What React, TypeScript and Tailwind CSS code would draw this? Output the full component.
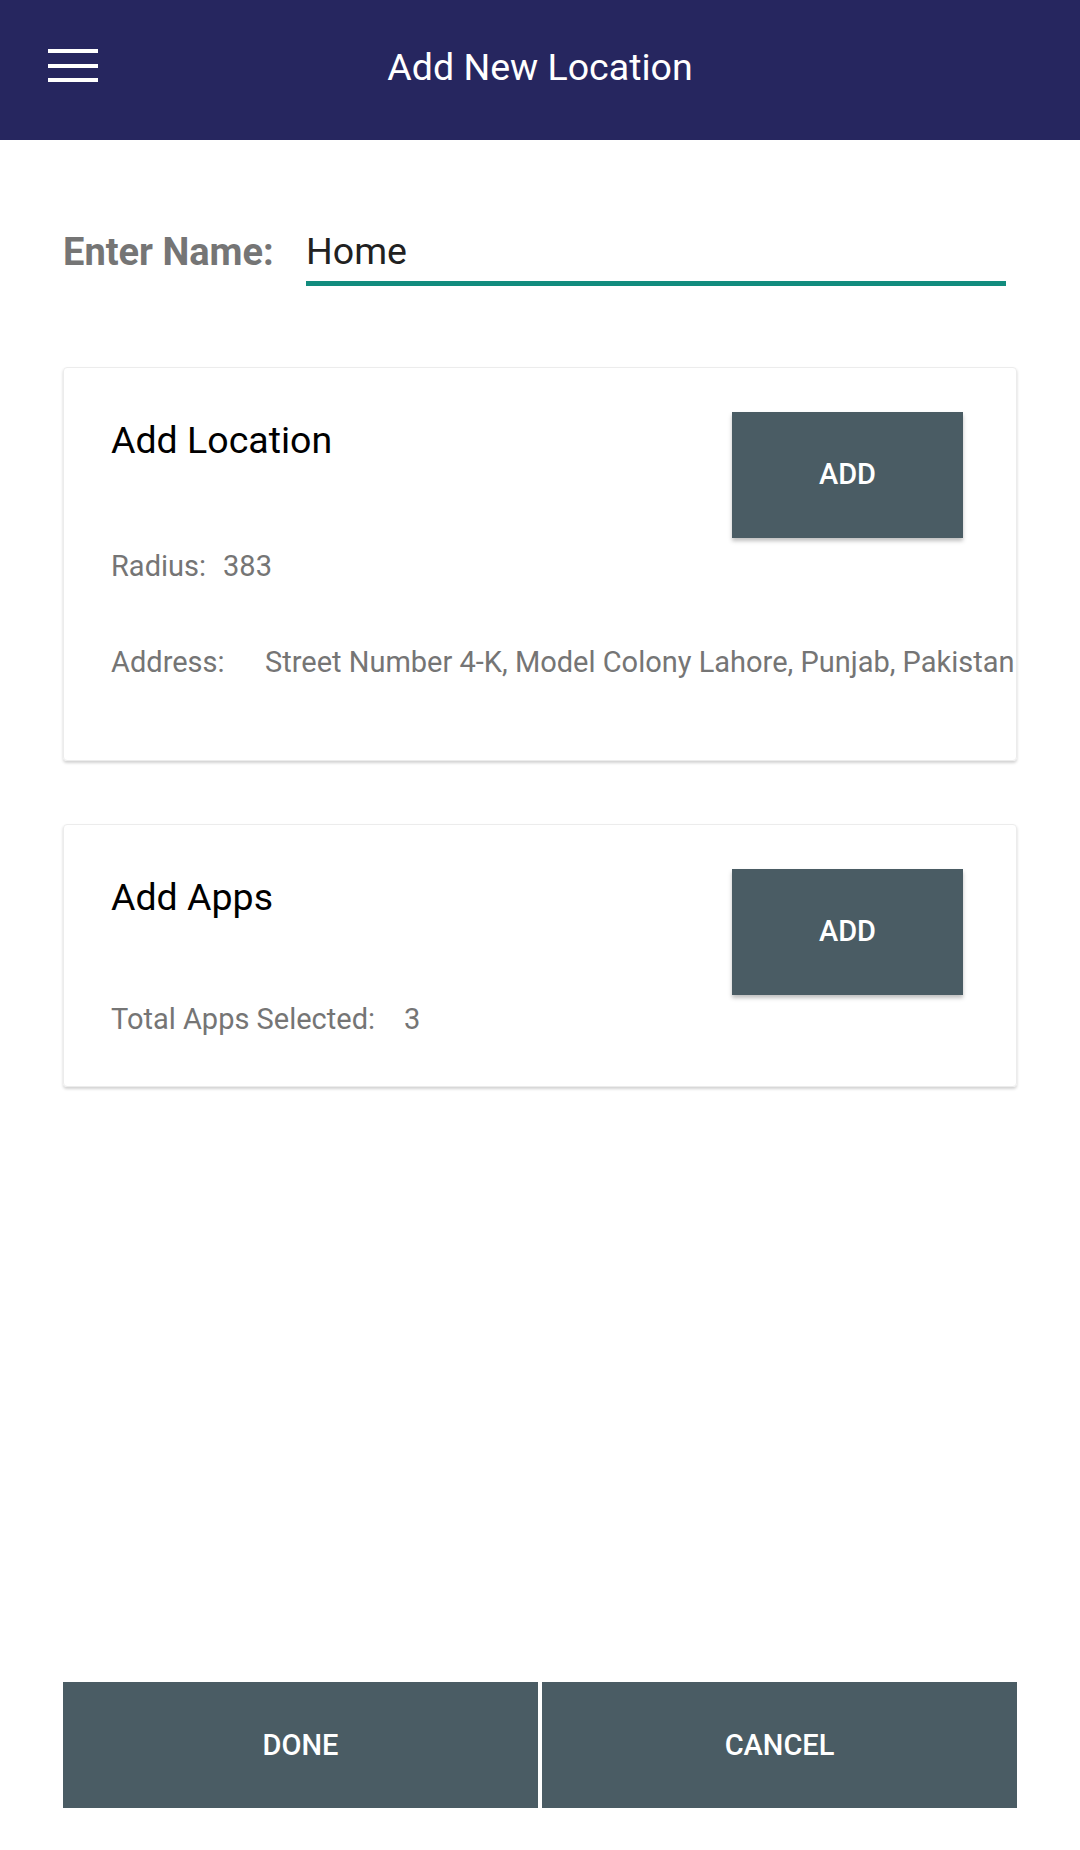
import React from "react";

function MenuIcon() {
  return (
    <svg width="50" height="34" viewBox="0 0 50 34" fill="#ffffff">
      <rect x="0" y="0" width="50" height="4" />
      <rect x="0" y="15" width="50" height="4" />
      <rect x="0" y="29" width="50" height="4" />
    </svg>
  );
}

function AddButton() {
  return (
    <button className="w-[231px] h-[126px] bg-[#4a5c64] text-white text-[29px] font-medium leading-none shadow-[0_3px_4px_rgba(0,0,0,0.25)] mr-[53px] shrink-0">
      ADD
    </button>
  );
}

export default function App() {
  return (
    <div
      className="min-h-[1850px] flex flex-col bg-white"
      style={{ fontFamily: "Roboto, 'Noto Sans', sans-serif" }}
    >
      {/* Top bar */}
      <header className="h-[140px] bg-[#26265f] relative flex items-center justify-center">
        <div className="absolute left-[48px] top-[49px]">
          <MenuIcon />
        </div>
        <h1 className="text-white text-[37.5px] leading-none mb-[4px]">Add New Location</h1>
      </header>

      <main className="px-[63px]">
        {/* Name input */}
        <div className="flex items-start mt-[93px]">
          <span className="w-[243px] text-[#757575] text-[38px] font-bold leading-none">Enter Name:</span>
          <div className="w-[700px] border-b-[5px] border-[#128c7e] pb-[10px]">
            <span className="text-[#212121] text-[37.5px] leading-none block">Home</span>
          </div>
        </div>

        {/* Add Location card */}
        <section className="mt-[81px] border border-[#ececec] rounded-[4px] shadow-[0_2px_3px_rgba(0,0,0,0.18)] pt-[44px] pb-[83px] pl-[47px]">
          <div className="flex items-start justify-between">
            <h2 className="mt-[10px] text-black text-[37.5px] leading-none">Add Location</h2>
            <AddButton />
          </div>
          <p className="mt-[14px] text-[#757575] text-[29px] leading-none">
            Radius:<span className="ml-[17px]">383</span>
          </p>
          <p className="mt-[67px] text-[#757575] text-[29px] leading-none whitespace-nowrap flex">
            <span className="w-[154px]">Address:</span>
            <span>Street Number 4-K, Model Colony Lahore, Punjab, Pakistan</span>
          </p>
        </section>

        {/* Add Apps card */}
        <section className="mt-[63px] border border-[#ececec] rounded-[4px] shadow-[0_2px_3px_rgba(0,0,0,0.18)] pt-[44px] pb-[52px] pl-[47px]">
          <div className="flex items-start justify-between">
            <h2 className="mt-[10px] text-black text-[37.5px] leading-none">Add Apps</h2>
            <AddButton />
          </div>
          <p className="mt-[10px] text-[#757575] text-[29px] leading-none">
            Total Apps Selected:<span className="ml-[29px]">3</span>
          </p>
        </section>
      </main>

      {/* Bottom actions */}
      <div className="mt-auto px-[63px] pb-[42px] grid grid-cols-2 gap-[4px]">
        <button className="h-[126px] bg-[#4a5c64] text-white text-[29px] font-medium leading-none">DONE</button>
        <button className="h-[126px] bg-[#4a5c64] text-white text-[29px] font-medium leading-none">CANCEL</button>
      </div>
    </div>
  );
}
